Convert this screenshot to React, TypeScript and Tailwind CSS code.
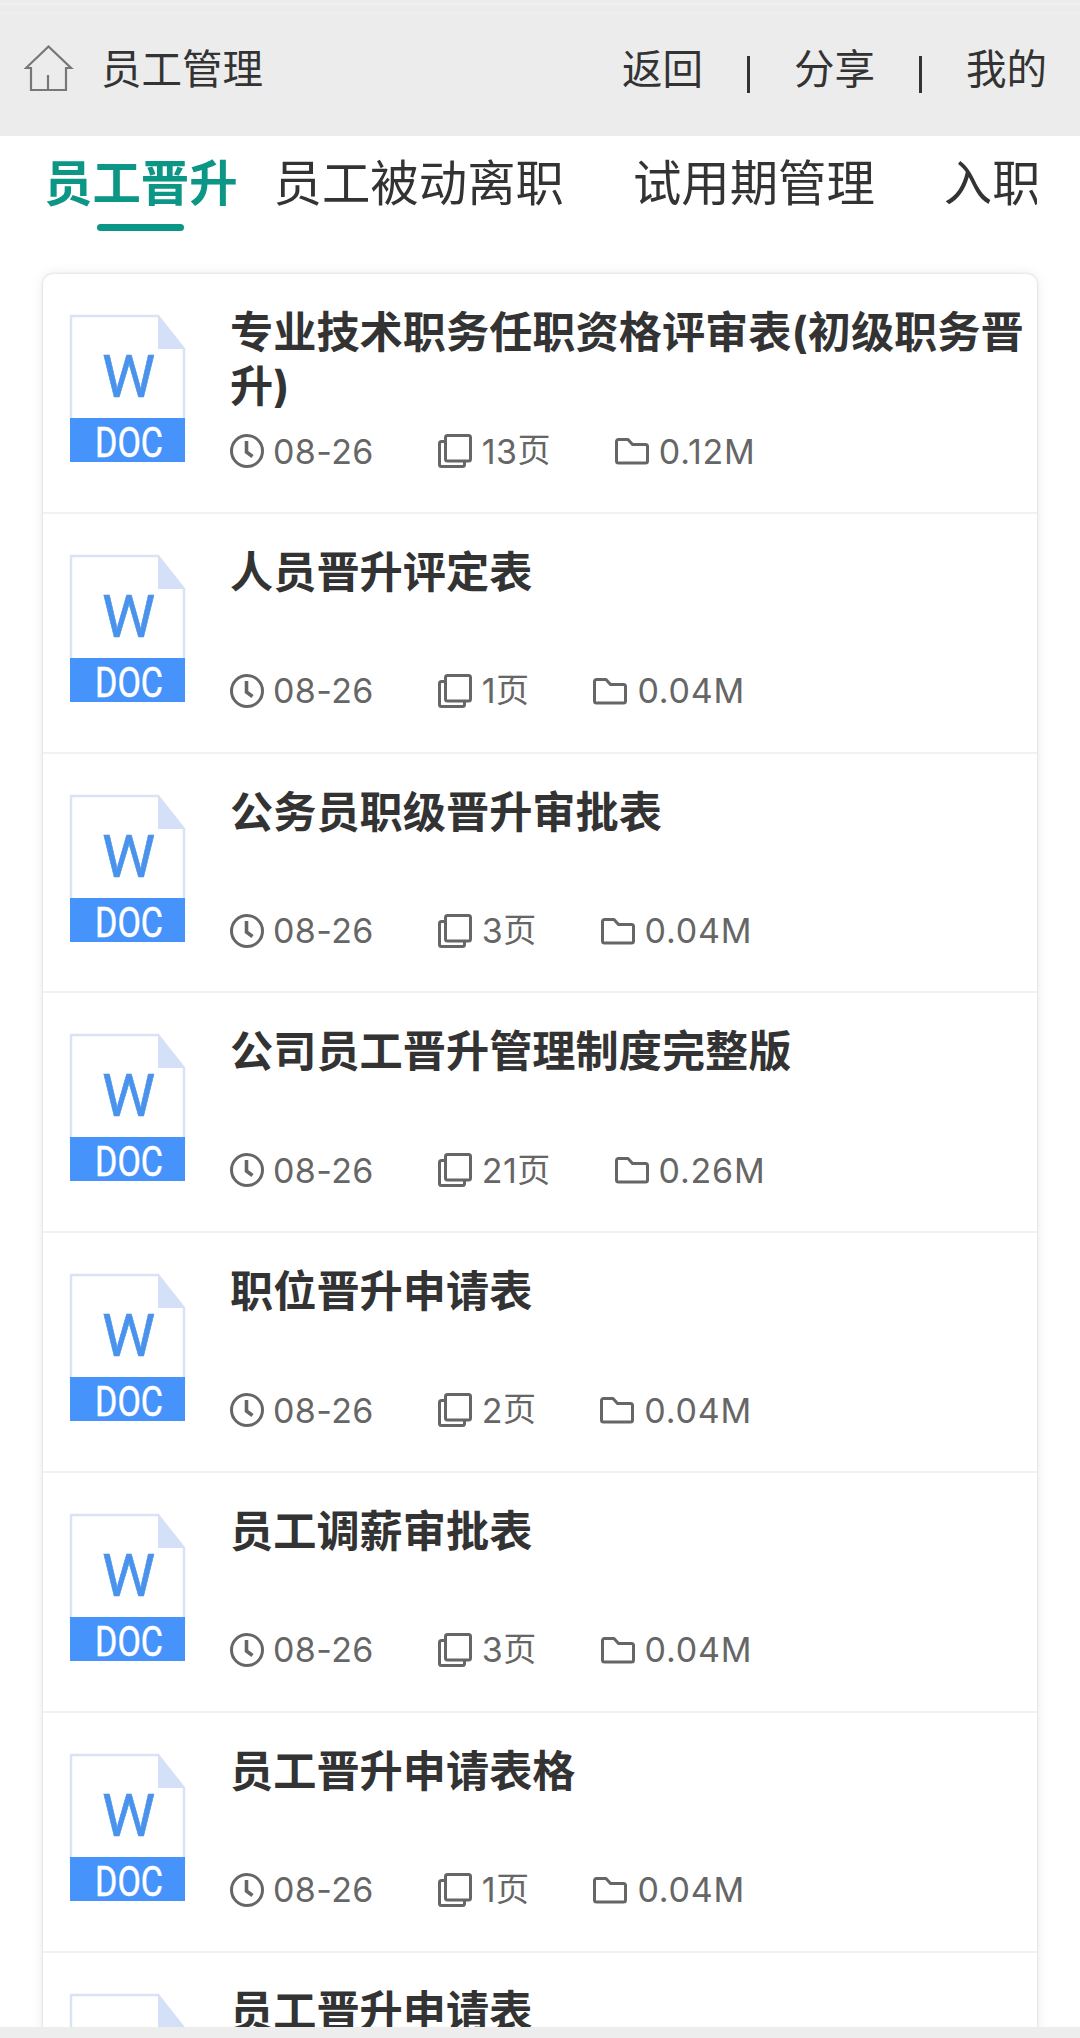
import clsx from 'clsx';

type Doc = {
  title: string;
  date: string;
  pages: number;
  size: string;
};

const tabs = ['员工晋升', '员工被动离职', '试用期管理', '入职'];

const docs: Doc[] = [
  { title: '专业技术职务任职资格评审表(初级职务晋升)', date: '08-26', pages: 13, size: '0.12M' },
  { title: '人员晋升评定表', date: '08-26', pages: 1, size: '0.04M' },
  { title: '公务员职级晋升审批表', date: '08-26', pages: 3, size: '0.04M' },
  { title: '公司员工晋升管理制度完整版', date: '08-26', pages: 21, size: '0.26M' },
  { title: '职位晋升申请表', date: '08-26', pages: 2, size: '0.04M' },
  { title: '员工调薪审批表', date: '08-26', pages: 3, size: '0.04M' },
  { title: '员工晋升申请表格', date: '08-26', pages: 1, size: '0.04M' },
  { title: '员工晋升申请表', date: '08-26', pages: 1, size: '0.04M' },
];

const HomeIcon = () => (
  <svg className="h-[48px] w-[50px] shrink-0" viewBox="0 0 50 48" fill="none" stroke="#777" strokeWidth={2.2}>
    <path d="M7 23H2L24.5 1.5 47 23h-5v22H7z" />
    <path d="M24 30v15" />
  </svg>
);

const DocIcon = () => (
  <svg className="h-[147px] w-[115px] shrink-0 overflow-visible" viewBox="0 0 115 147">
    <path d="M1 110V1h87l26 33v76" fill="#fff" stroke="#d9e3f5" strokeWidth={2.5} />
    <path d="M88 0v34h27z" fill="#d3e0f8" />
    <rect y="103" width="115" height="44" fill="#4593fb" />
    <text
      x="58.5"
      y="82"
      textAnchor="middle"
      fontFamily="Roboto, sans-serif"
      fontSize="60"
      fill="#4a93ec"
      stroke="#4a93ec"
      strokeWidth={0.6}
    >
      W
    </text>
    <text
      transform="translate(59 141.5) scale(0.81 1)"
      textAnchor="middle"
      fontFamily="Roboto, sans-serif"
      fontSize="42"
      fill="#fff"
      stroke="#fff"
      strokeWidth={0.5}
    >
      DOC
    </text>
  </svg>
);

const ClockIcon = () => (
  <svg className="size-[34px] shrink-0" viewBox="0 0 34 34" fill="none" stroke="currentColor">
    <circle cx="17" cy="17" r="15.5" strokeWidth={3} />
    <path d="M16.5 7v11l6 4.5" strokeWidth={3.6} />
  </svg>
);

const CopyIcon = () => (
  <svg className="size-[34px] shrink-0" viewBox="0 0 34 34" fill="none" stroke="currentColor" strokeWidth={3}>
    <rect x="7.5" y="1.5" width="25" height="25.5" rx="2" />
    <path d="M7.5 7.5h-4a2 2 0 0 0-2 2v21a2 2 0 0 0 2 2h21a2 2 0 0 0 2-2V27" />
  </svg>
);

const FolderIcon = () => (
  <svg className="size-[34px] shrink-0" viewBox="0 0 34 34" fill="none" stroke="currentColor" strokeWidth={3}>
    <path
      d="M3.5 5.5H13l4.500 5h13a2 2 0 0 1 2 2V27a2 2 0 0 1-2 2h-27a2 2 0 0 1-2-2V7.500a2 2 0 0 1 2-2z"
      strokeLinejoin="round"
    />
  </svg>
);

const Header = () => (
  <header className="flex h-[136px] shrink-0 flex-col bg-[#ececec]">
    <div className="mt-[3px] h-[2px] bg-[#f1f1f1]" />
    <div className="mt-[7px] h-[2px] bg-[#efefef]" />
    <div className="flex flex-1 items-center pb-[12px] pl-6 pr-[33px] text-[40.5px] text-[#333]">
      <HomeIcon />
      <h1 className="ml-[27px] translate-y-px">员工管理</h1>
      <nav className="ml-auto flex items-center">
        <a className="translate-y-px">返回</a>
        <span className="mx-[44px] h-[37px] w-[3px] translate-y-[5px] bg-[#333]" />
        <a className="translate-y-px">分享</a>
        <span className="mx-[44px] h-[37px] w-[3px] translate-y-[5px] bg-[#333]" />
        <a className="translate-y-px">我的</a>
      </nav>
    </div>
  </header>
);

const Tabs = () => (
  <div className="mx-[43px] flex h-[138px] shrink-0 overflow-hidden whitespace-nowrap pt-3 text-[48.4px] leading-[72px] text-[#333]">
    {tabs.map((tab, i) => (
      <div
        key={tab}
        className={clsx(
          'flex shrink-0 flex-col items-center',
          i === 0 ? 'ml-px mr-[36px] font-bold text-[#0c9685]' : 'mr-[69px]'
        )}
      >
        {tab}
        {i === 0 && <span className="mt-[4px] h-[7px] w-[87px] rounded-full bg-[#0c9685]" />}
      </div>
    ))}
  </div>
);

const DocRow = ({ doc }: { doc: Doc }) => (
  <li className="flex h-[239.8px] items-start border-b-2 border-[#f1f1f1] pl-[27px] pt-[41px]">
    <DocIcon />
    <div className="-mt-[10px] ml-[45px] flex h-[171px] flex-1 flex-col justify-between">
      <h2 className="text-[43.2px] font-bold leading-[54px] text-[#333]">{doc.title}</h2>
      <div className="flex h-[50px] items-center text-[34px] tracking-[0.4px] text-[#666]">
        <ClockIcon />
        <span className="ml-[9px] mr-[64px]">{doc.date}</span>
        <CopyIcon />
        <span className="ml-[10px] mr-[64px] flex items-center">
          {doc.pages}
          <span className="text-[33px]">页</span>
        </span>
        <FolderIcon />
        <span className="ml-[10px] tracking-[0.8px]">{doc.size}</span>
      </div>
    </div>
  </li>
);

const App = () => {
  return (
    <div className="flex h-[2038px] w-[1080px] flex-col overflow-hidden bg-white font-[Inter,'Noto_Sans_CJK_SC',sans-serif]">
      <Header />
      <Tabs />
      <main className="-mt-5 min-h-0 flex-1 overflow-hidden px-[43px] pt-5">
        <ul className="rounded-[10px] bg-white shadow-[0_0_2px_1px_rgba(0,0,0,0.08),0_0_14px_rgba(0,0,0,0.08)]">
          {docs.map((doc) => (
            <DocRow key={doc.title} doc={doc} />
          ))}
        </ul>
      </main>
      <footer className="h-[11px] shrink-0 bg-[#eeeded]" />
    </div>
  );
};

export default App;
